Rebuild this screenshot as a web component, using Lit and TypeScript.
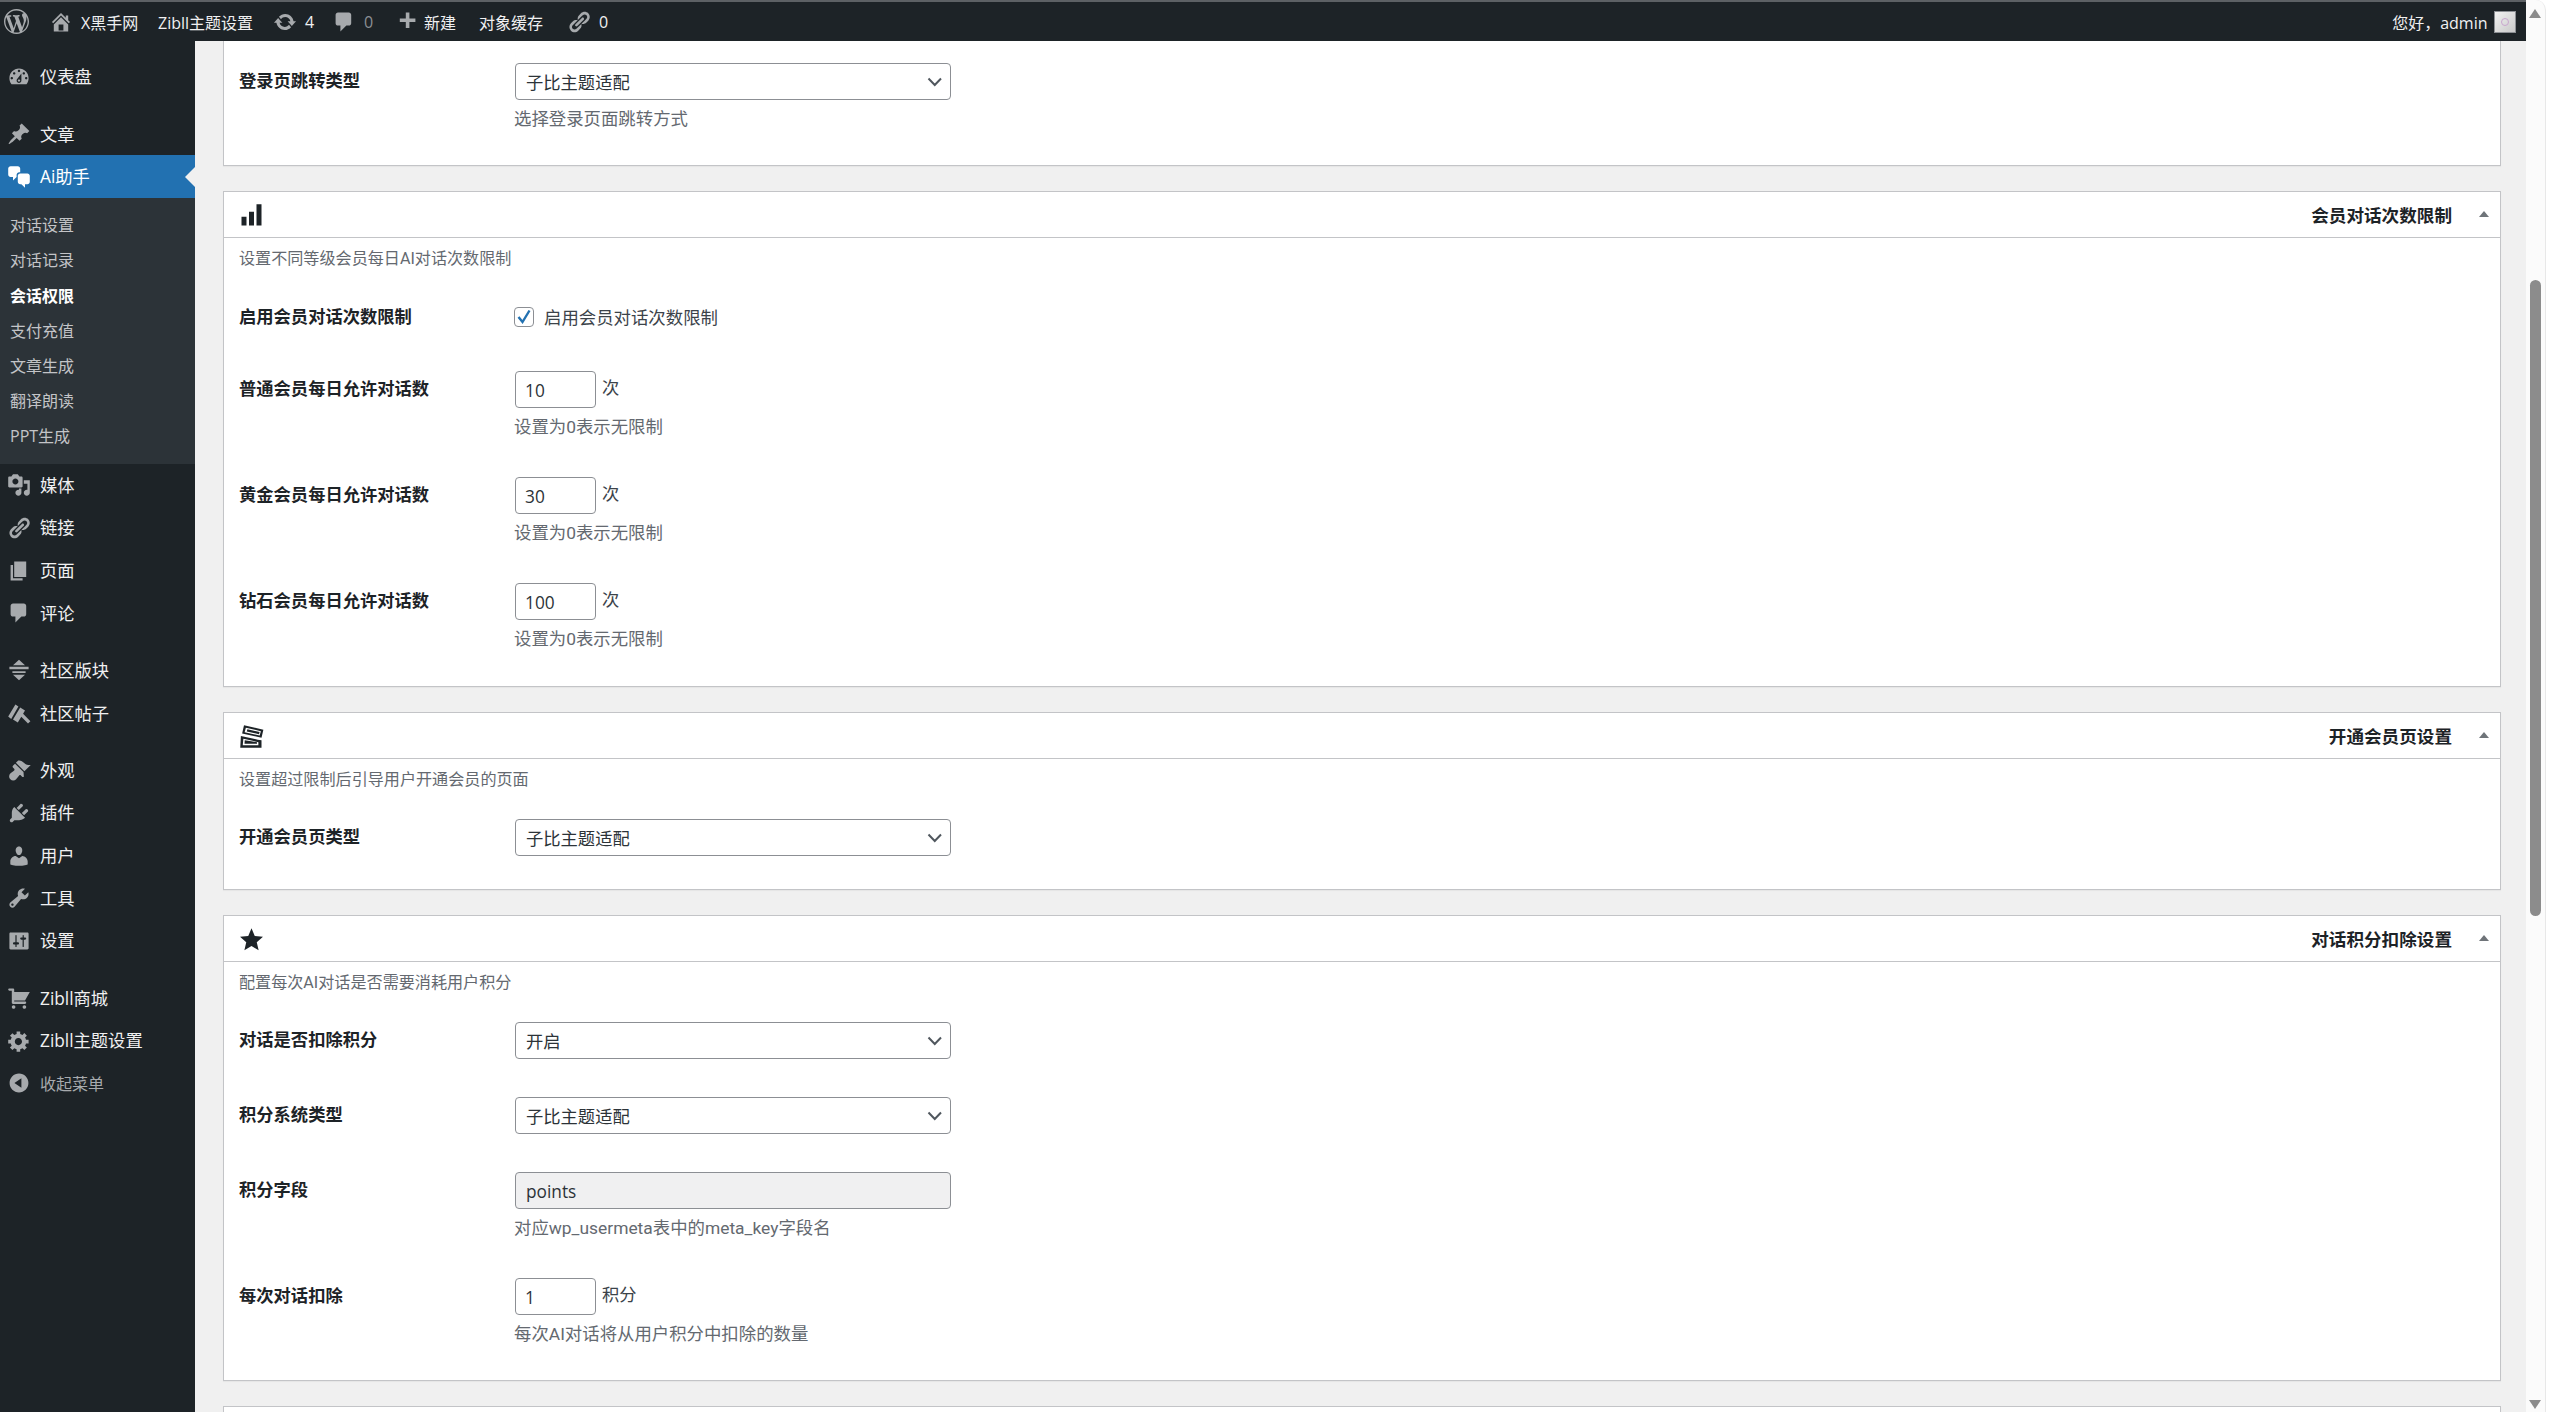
import { LitElement, html, css, svg } from "lit";
import { customElement } from "lit/decorators.js";

const P: Record<string, string> = {
  wp: "M20 10c0-5.51-4.49-10-10-10C4.48 0 0 4.49 0 10c0 5.52 4.48 10 10 10 5.51 0 10-4.48 10-10zM7.78 15.37L4.37 6.22c.55-.02 1.17-.08 1.17-.08.5-.06.44-1.13-.06-1.11 0 0-1.45.11-2.37.11-.18 0-.37 0-.58-.01C4.12 2.69 6.87 1.11 10 1.11c2.33 0 4.45.87 6.05 2.34-.68-.11-1.65.39-1.65 1.58 0 .74.45 1.36.9 2.1.35.61.55 1.36.55 2.46 0 1.49-1.4 5-1.4 5l-3.03-8.37c.54-.02.82-.17.82-.17.5-.05.44-1.25-.06-1.22 0 0-1.44.12-2.38.12-.87 0-2.33-.12-2.33-.12-.5-.03-.56 1.2-.06 1.22l.92.08 1.26 3.41zM17.41 10c.24-.64.74-1.87.43-4.25.7 1.29 1.05 2.71 1.05 4.25 0 3.29-1.73 6.24-4.4 7.78.97-2.59 1.94-5.2 2.92-7.78zM6.1 18.09C3.12 16.65 1.11 13.53 1.11 10c0-1.3.23-2.48.72-3.59C3.25 10.3 4.67 14.2 6.1 18.09zm4.03-6.63l2.58 6.98c-.86.29-1.76.45-2.71.45-.79 0-1.57-.11-2.29-.33.81-2.38 1.62-4.74 2.42-7.1z",
  home: "M16 8.5l1.53 1.53-1.06 1.06L10 4.62l-6.47 6.47-1.06-1.06L10 2.5l4 4v-2h2v4zm-6-2.46l6 5.99V18H4v-5.97zM12 17v-5H8v5h4z",
  update: "M10.2 3.28c3.53 0 6.43 2.61 6.92 6h2.08l-3.5 4-3.5-4h2.32c-.45-1.97-2.21-3.45-4.32-3.45-1.45 0-2.73.71-3.54 1.78L4.95 5.66C6.23 4.2 8.11 3.28 10.2 3.28zm-.4 13.44c-3.52 0-6.43-2.61-6.92-6H.8l3.5-4c1.17 1.33 2.33 2.67 3.5 4H5.48c.45 1.97 2.21 3.45 4.32 3.45 1.45 0 2.73-.71 3.54-1.78l1.71 1.95c-1.28 1.46-3.15 2.38-5.25 2.38z",
  comment: "M5 2h9c1.1 0 2 .9 2 2v7c0 1.1-.9 2-2 2h-2l-5 5v-5H5c-1.1 0-2-.9-2-2V4c0-1.1.9-2 2-2z",
  plus: "M17 7v3h-5v5H9v-5H4V7h5V2h3v5h5z",
  dashboard: "M3.76 16h12.48c1.1-1.37 1.76-3.11 1.76-5 0-4.42-3.58-8-8-8s-8 3.58-8 8c0 1.89.66 3.63 1.76 5zM10 4c.55 0 1 .45 1 1s-.45 1-1 1-1-.45-1-1 .45-1 1-1zM6 6c.55 0 1 .45 1 1s-.45 1-1 1-1-.45-1-1 .45-1 1-1zm8 0c.55 0 1 .45 1 1s-.45 1-1 1-1-.45-1-1 .45-1 1-1zm-5.37 5.55L12 7v6c0 1.1-.9 2-2 2s-2-.9-2-2c0-.57.24-1.08.63-1.45zM4 10c.55 0 1 .45 1 1s-.45 1-1 1-1-.45-1-1 .45-1 1-1zm12 0c.55 0 1 .45 1 1s-.45 1-1 1-1-.45-1-1 .45-1 1-1zm-5 3c0-.55-.45-1-1-1s-1 .45-1 1 .45 1 1 1 1-.45 1-1z",
  post: "M10.44 3.02l1.82-1.82 6.36 6.35-1.83 1.82c-1.05-.68-2.48-.57-3.41.36l-.75.75c-.92.93-1.04 2.35-.35 3.41l-1.83 1.82-2.41-2.41-2.8 2.79c-.42.42-3.38 2.71-3.8 2.29s1.86-3.39 2.28-3.81l2.79-2.79L4.1 9.36l1.83-1.82c1.05.69 2.48.57 3.4-.36l.75-.75c.93-.92 1.05-2.35.36-3.41z",
  chat: "M11 6h-.82C9.07 6 8 7.2 8 8.16V10l-3 3v-3H3c-1.1 0-2-.9-2-2V3c0-1.1.9-2 2-2h6c1.1 0 2 .9 2 2v3zm0 1h6c1.1 0 2 .9 2 2v5c0 1.1-.9 2-2 2h-2v3l-3-3h-1c-1.1 0-2-.9-2-2V9c0-1.1.9-2 2-2z",
  media: "M13 11V4c0-.55-.45-1-1-1h-1.67L9 1H5L3.67 3H2c-.55 0-1 .45-1 1v7c0 .55.45 1 1 1h10c.55 0 1-.45 1-1zM7 4.5c1.38 0 2.5 1.12 2.5 2.5S8.38 9.5 7 9.5 4.5 8.38 4.5 7 5.62 4.5 7 4.5zM14 6h5v10.5c0 1.38-1.12 2.5-2.5 2.5S14 17.88 14 16.5s1.12-2.5 2.5-2.5c.17 0 .34.02.5.05V9h-3V6zm-4 8.05V13h2v3.5c0 1.38-1.12 2.5-2.5 2.5S7 17.88 7 16.5 8.12 14 9.5 14c.17 0 .34.02.5.05z",
  links: "M17.74 2.76c1.68 1.69 1.68 4.41 0 6.1l-1.53 1.52c-1.12 1.12-2.7 1.47-4.14 1.09l2.62-2.61.76-.77.76-.76c.84-.84.84-2.2 0-3.04-.84-.85-2.2-.85-3.04 0l-.77.76-3.38 3.38c-.37-1.44-.02-3.02 1.1-4.14l1.52-1.53c1.69-1.68 4.42-1.68 6.1 0zM8.59 13.43l5.34-5.34c.42-.42.42-1.1 0-1.52-.44-.43-1.13-.39-1.53 0l-5.33 5.34c-.42.42-.42 1.1 0 1.52.44.43 1.13.39 1.52 0zm-.76 2.29l4.14-4.15c.38 1.44.03 3.02-1.09 4.14l-1.52 1.53c-1.69 1.68-4.41 1.68-6.1 0-1.68-1.68-1.68-4.42 0-6.1l1.53-1.52c1.12-1.12 2.7-1.47 4.14-1.1l-4.14 4.15c-.85.84-.85 2.2 0 3.05.84.84 2.2.84 3.04 0z",
  page: "M6 15V2h10v13H6zm-1 1h8v2H3V5h2v11z",
  forum: "M10 1.5L15 6H5zM2 7.2h16v2.2H2zM4.5 11h11v1.6h-11zM5 14h10l-5 4.5z",
  brush: "M1 13L7 3l2.5 1.5L3.5 15zM5 15.5l6-10 4 2.5-1.6 2.7 6.1 6.1-2 2-5.6-5.6L9 18z",
  appearance: "M14.48 11.06L7.41 3.99l1.5-1.5c.5-.56 2.3-.47 3.51.32 1.21.8 1.43 1.28 2.91 2.1 1.18.64 2.45 1.26 4.45.85zm-.71.71L6.7 4.7 4.93 6.47c-.39.39-.39 1.02 0 1.41l1.06 1.06c.39.39.39 1.03 0 1.42-.6.6-1.43 1.11-2.21 1.69-.35.26-.7.53-1.01.84-1.34 1.34-1.34 3.51 0 4.85s3.51 1.34 4.85 0c.31-.31.58-.66.84-1.01.58-.78 1.09-1.61 1.69-2.21.39-.39 1.03-.39 1.42 0l1.06 1.06c.39.39 1.02.39 1.41 0z",
  plugins: "M13.11 4.36L9.87 7.6 8 5.73l3.24-3.24c.35-.34 1.05-.2 1.56.32.52.51.66 1.21.31 1.55zm-8 1.77l.91-1.12 9.01 9.01-1.19.84c-.71.71-2.63 1.16-3.82 1.16H6.14L4.9 17.26c-.59.59-1.54.59-2.12 0-.59-.58-.59-1.53 0-2.12l1.24-1.24v-3.88c0-1.13.4-3.19 1.09-3.89zm7.26 3.97l3.24-3.24c.34-.35 1.04-.21 1.55.31.52.51.66 1.21.31 1.55l-3.24 3.25z",
  users: "M10 9.25c-2.27 0-2.73-3.44-2.73-3.44C7 4.02 7.82 2 9.97 2c2.16 0 2.98 2.02 2.71 3.81 0 0-.41 3.44-2.68 3.44zm0 2.57L12.72 10c2.39 0 4.52 2.33 4.52 4.53v2.49s-3.65 1.13-7.24 1.13c-3.65 0-7.24-1.13-7.24-1.13v-2.49c0-2.25 1.94-4.48 4.47-4.48z",
  tools: "M16.68 9.77c-1.34 1.34-3.3 1.67-4.95.99l-5.41 6.52c-.99.99-2.59.99-3.58 0s-.99-2.59 0-3.57l6.52-5.42c-.68-1.65-.35-3.61.99-4.95 1.28-1.28 3.12-1.62 4.72-1.06l-2.89 2.89 2.82 2.82 2.86-2.87c.53 1.58.18 3.39-1.08 4.65zM3.81 16.21c.4.39 1.04.39 1.43 0 .4-.4.4-1.04 0-1.43-.39-.4-1.03-.4-1.43 0-.39.39-.39 1.03 0 1.43z",
  settings: "M18 16V4c0-.55-.45-1-1-1H3c-.55 0-1 .45-1 1v12c0 .55.45 1 1 1h14c.55 0 1-.45 1-1zM8 11h1c.55 0 1 .45 1 1s-.45 1-1 1H8v1.5c0 .28-.22.5-.5.5s-.5-.22-.5-.5V13H6c-.55 0-1-.45-1-1s.45-1 1-1h1V5.5c0-.28.22-.5.5-.5s.5.22.5.5V11zm5-2h-1c-.55 0-1-.45-1-1s.45-1 1-1h1V5.5c0-.28.22-.5.5-.5s.5.22.5.5V7h1c.55 0 1 .45 1 1s-.45 1-1 1h-1v5.5c0 .28-.22.5-.5.5s-.5-.22-.5-.5V9z",
  cart: "M6 13h9c.55 0 1 .45 1 1s-.45 1-1 1H5c-.55 0-1-.45-1-1V4H2c-.55 0-1-.45-1-1s.45-1 1-1h3c.55 0 1 .45 1 1v2h13l-4 7H6v1zm-.5 3c.83 0 1.5.67 1.5 1.5S6.33 19 5.5 19 4 18.33 4 17.5 4.67 16 5.5 16zm9 0c.83 0 1.5.67 1.5 1.5s-.67 1.5-1.5 1.5-1.5-.67-1.5-1.5.67-1.5 1.5-1.5z",
  gear: "M18 12h-2.18c-.17.7-.44 1.35-.81 1.93l1.54 1.54-2.1 2.1-1.54-1.54c-.58.36-1.23.63-1.91.79V19H8v-2.18c-.68-.16-1.33-.43-1.91-.79l-1.54 1.54-2.12-2.12 1.54-1.54c-.36-.58-.63-1.23-.79-1.91H1V9.03h2.17c.16-.7.44-1.35.8-1.94L2.43 5.55l2.1-2.1 1.54 1.54c.58-.37 1.24-.64 1.93-.81V2h3v2.18c.68.16 1.33.43 1.91.79l1.54-1.54 2.12 2.12-1.54 1.54c.36.59.64 1.24.8 1.94H18V12zm-8.5 1.5c1.66 0 3-1.34 3-3s-1.34-3-3-3-3 1.34-3 3 1.34 3 3 3z",
  collapse: "M10 2.16c4.33 0 7.84 3.51 7.84 7.84s-3.51 7.84-7.84 7.84S2.16 14.33 2.16 10 5.71 2.16 10 2.16zm2 11.72V6.12L6.18 9.97z",
  bars: "M2 11h4v7H2zM8 7h4v11H8zM14 1h4v17h-4z",
  tickets: "M4 1l15.5 3.5L18 11 2.5 7.5zM5.5 3l-1 3.5 12 2.7 1-3.5zM6.7 4.2l-.5 1.7 9.8 2.2.5-1.7zM1.5 9.5L15 12.5l3 .5v6H1zM3.5 11.8L3 17h12.5v-2.5zM4.6 13l-.2 2.8h10v-1.2z",
  star: "M10 1l2.6 6.1 6.6.6-5 4.4 1.5 6.5L10 15.1l-5.7 3.5 1.5-6.5-5-4.4 6.6-.6z",
};

const icon = (name: string, size: number) =>
  html`<svg class="ic" width=${size} height=${size} viewBox="0 0 20 20" aria-hidden="true">${svg`<path d=${P[name]} fill="currentColor" fill-rule="evenodd"></path>`}</svg>`;

type MenuItem = { t: string; i: string; sep?: boolean };
const menuTop: MenuItem[] = [
  { t: "仪表盘", i: "dashboard" },
  { t: "文章", i: "post", sep: true },
];
const subMenu = ["对话设置", "对话记录", "会话权限", "支付充值", "文章生成", "翻译朗读", "PPT生成"];
const menuBottom: MenuItem[] = [
  { t: "媒体", i: "media" },
  { t: "链接", i: "links" },
  { t: "页面", i: "page" },
  { t: "评论", i: "comment" },
  { t: "社区版块", i: "forum", sep: true },
  { t: "社区帖子", i: "brush" },
  { t: "外观", i: "appearance", sep: true },
  { t: "插件", i: "plugins" },
  { t: "用户", i: "users" },
  { t: "工具", i: "tools" },
  { t: "设置", i: "settings" },
  { t: "Zibll商城", i: "cart", sep: true },
  { t: "Zibll主题设置", i: "gear" },
];

@customElement("app-root")
export class AppRoot extends LitElement {
  static styles = css`
    :host {
      display: block;
      width: 2549px;
      height: 1412px;
      overflow: hidden;
      position: relative;
      background: #f0f0f0;
      font-family: "Open Sans", "Noto Sans CJK SC", sans-serif;
      color: #1d2327;
    }
    .ic { display: block; flex: none; }
    .frame { display: flex; flex-direction: column; width: 2526px; height: 1412px; }

    .bar {
      flex: none;
      height: 39px;
      margin-top: 2px;
      background: #1d2327;
      color: #f0f0f1;
      display: flex;
      align-items: center;
      font-size: 16px;
    }
    .bar .edge { position: absolute; left: 0; top: 0; width: 2526px; height: 2px; background: #5d6165; }
    .bar .ab { display: flex; align-items: center; color: #a7aaad; }
    .bar .ab span { color: #f0f0f1; }
    .bar .ab span.dim { color: #8c8f94; }
    .bar .logo { margin-left: 4px; width: 43px; }
    .bar .home { width: 111px; gap: 8px; padding-left: 2px; box-sizing: border-box; }
    .bar .zib { width: 115px; }
    .bar .upd { width: 59px; gap: 8px; }
    .bar .com { width: 63px; gap: 8px; }
    .bar .new { width: 84px; gap: 5px; }
    .bar .cache { width: 88px; }
    .bar .lnk { gap: 8px; }
    .bar .right { margin-left: auto; display: flex; align-items: center; gap: 6.5px; padding-right: 10px; }
    .bar .avatar {
      width: 20px; height: 20px;
      border: 1px solid #8c8f94;
      background: linear-gradient(135deg, #f2f2f2, #c8c8c8);
      display: flex; align-items: center; justify-content: center;
    }
    .bar .avatar i { width: 6px; height: 6px; border-radius: 50%; border: 1px solid #c9a6cf; display: block; }

    .main { flex: 1; display: flex; min-height: 0; }
    .side {
      width: 195px;
      flex: none;
      background: #1d2327;
      padding-top: 14.6px;
      box-sizing: border-box;
    }
    .mi {
      height: 42.7px;
      display: flex;
      align-items: center;
      color: #f0f0f1;
      font-size: 17.3px;
      box-sizing: border-box;
      padding-left: 7px;
      gap: 9px;
    }
    .mi span { position: relative; top: -1px; }
    .mi .ic { color: #a7aaad; }
    .mi.sep { margin-top: 14.4px; }
    .mi.active { background: #2271b1; color: #fff; position: relative; }
    .mi.active .ic { color: #fff; }
    .mi.active::after {
      content: "";
      position: absolute;
      right: 0; top: 50%;
      margin-top: -10px;
      border: 10px solid transparent;
      border-left: 0;
      border-right-color: #f0f0f0;
    }
    .mi.collapse { color: #a7aaad; font-size: 16px; }
    .mi.collapse span { top: 0; }
    .sub {
      background: #2c3338;
      padding: 10.2px 0 9.4px;
    }
    .sub div {
      height: 35.2px;
      line-height: 35.2px;
      padding-left: 10px;
      font-size: 16px;
      color: #c3c4c7;
    }
    .sub div.cur { color: #fff; font-weight: 700; }

    .content {
      flex: 1;
      min-width: 0;
      padding: 0 25px 0 28px;
      display: flex;
      flex-direction: column;
      gap: 25px;
    }
    .card {
      flex: none;
      background: #fff;
      border: 1px solid #c3c4c7;
      box-shadow: 0 1px 1px rgba(0,0,0,.04);
      box-sizing: border-box;
    }
    .first { border-top: 0; height: 125px; padding-top: 22px; }
    .card2 { height: 496px; }
    .card3 { height: 178px; }
    .card4 { height: 466px; }
    .card5 { height: 60px; }
    .head {
      height: 45px;
      border-bottom: 1px solid #c3c4c7;
      display: flex;
      align-items: center;
      padding: 0 11px 0 15px;
      box-sizing: content-box;
    }
    .head .ic { margin-top: 1px; }
    .head .title { margin-left: auto; font-size: 17.6px; font-weight: 700; }
    .head .tri {
      margin-left: 27px;
      width: 0; height: 0;
      border: 5px solid transparent;
      border-top: 0;
      border-bottom: 6px solid #6f7479;
      margin-bottom: 2px;
    }
    .intro {
      font-family: Roboto, "Noto Sans CJK SC", sans-serif;
      font-size: 16.1px; color: #646970; line-height: 22px; padding: 10px 15px 0;
    }
    .row { display: flex; padding-left: 15px; }
    .cbrow { margin-top: 35px; }
    .mt28 { margin-top: 28px; }
    .mt38 { margin-top: 38px; }
    .mt39 { margin-top: 39px; }
    .mt42 { margin-top: 42px; }
    .lab { width: 276px; flex: none; font-size: 17.3px; font-weight: 700; line-height: 24px; padding-top: 5.5px; }
    .cbrow .lab { padding-top: 0; }
    .ctl { flex: 1; min-width: 0; }
    .line { display: flex; align-items: flex-start; }
    .sel, .inp {
      height: 37px;
      box-sizing: border-box;
      border: 1px solid #8c8f94;
      border-radius: 4px;
      background: #fff;
      font-size: 17.3px;
      line-height: 37px;
      color: #2c3338;
      padding-left: 10px;
    }
    .sel, .wide { width: 436px; position: relative; display: flex; align-items: center; }
    .sel svg { position: absolute; right: 7px; top: 10px; }
    .sel span, .wide span, .inp span { display: block; line-height: 35px; margin-top: 1px; }
    .num { width: 81px; padding-left: 9px; }
    .ro { background: #f0f0f1; }
    .unit { font-size: 17.3px; line-height: 24px; margin-left: 6px; color: #3c434a; margin-top: 5px; }
    .desc {
      font-family: Roboto, "Noto Sans CJK SC", sans-serif;
      font-size: 17.4px; color: #646970; line-height: 24px; padding-top: 1px; margin: 6px 0 -1px -1px;
    }
    .cb {
      width: 20px; height: 20px; box-sizing: border-box;
      border: 1px solid #8c8f94; border-radius: 4px; background: #fff;
      flex: none; position: relative;
      display: flex; align-items: center; justify-content: center;
      color: #2271b1;
    }
    .cbline { display: flex; align-items: center; gap: 10px; margin-left: -1px; font-size: 17.4px; color: #3c434a; line-height: 24px; }

    .scroll {
      position: absolute; right: 0; top: 0; bottom: 0; width: 23px;
      background: #fff;
    }
    .track { position: absolute; left: 0; top: 0; bottom: 0; width: 19px; background: #fbfbfb; border-right: 1px solid #e8e8e8; border-top-right-radius: 10px; }
    .thumb { position: absolute; left: 4px; top: 280px; width: 11px; height: 636px; background: #8c8c8c; border-radius: 6px; }
    .up, .down { position: absolute; left: 3px; width: 0; height: 0; border: 6.5px solid transparent; }
    .up { top: 9px; border-top: 0; border-bottom: 9px solid #8c8c8c; }
    .down { bottom: 3px; border-bottom: 0; border-top: 9px solid #8c8c8c; }
  `;

  private sel(t: string) {
    return html`<div class="sel"><span>${t}</span>
      <svg width="16" height="16" viewBox="0 0 16 16" aria-hidden="true">${svg`<path d="M1.5 4.5L7.75 11 14 4.5" fill="none" stroke="#50575e" stroke-width="2"></path>`}</svg>
    </div>`;
  }
  private head(i: string, t: string, size = 25) {
    return html`<div class="head">${icon(i, size)}<div class="title">${t}</div><div class="tri"></div></div>`;
  }
  private mi(m: MenuItem) {
    return html`<div class="mi ${m.sep ? "sep" : ""}">${icon(m.i, 24)}<span>${m.t}</span></div>`;
  }
  private numRow(lab: string, val: string, unit: string, desc: string, mt: string) {
    return html`<div class="row ${mt}">
      <div class="lab">${lab}</div>
      <div class="ctl">
        <div class="line"><div class="inp num"><span>${val}</span></div><div class="unit">${unit}</div></div>
        <div class="desc">${desc}</div>
      </div>
    </div>`;
  }
  private selRow(lab: string, v: string, mt: string) {
    return html`<div class="row ${mt}"><div class="lab">${lab}</div><div class="ctl">${this.sel(v)}</div></div>`;
  }

  render() {
    return html`
      <div class="frame">
        <div class="bar">
          <div class="edge"></div>
          <div class="ab logo">${icon("wp", 25)}</div>
          <div class="ab home">${icon("home", 24)}<span>X黑手网</span></div>
          <div class="ab zib"><span>Zibll主题设置</span></div>
          <div class="ab upd">${icon("update", 24)}<span>4</span></div>
          <div class="ab com">${icon("comment", 24)}<span class="dim">0</span></div>
          <div class="ab new">${icon("plus", 24)}<span>新建</span></div>
          <div class="ab cache"><span>对象缓存</span></div>
          <div class="ab lnk">${icon("links", 24)}<span>0</span></div>
          <div class="right"><span>您好，admin</span><div class="avatar"><i></i></div></div>
        </div>
        <div class="main">
          <nav class="side">
            ${menuTop.map((m) => this.mi(m))}
            <div class="mi active">${icon("chat", 24)}<span>Ai助手</span></div>
            <div class="sub">
              ${subMenu.map((s, i) => html`<div class=${i === 2 ? "cur" : ""}>${s}</div>`)}
            </div>
            ${menuBottom.map((m) => this.mi(m))}
            <div class="mi collapse">${icon("collapse", 24)}<span>收起菜单</span></div>
          </nav>
          <div class="content">
            <section class="card first">
              <div class="row">
                <div class="lab">登录页跳转类型</div>
                <div class="ctl">${this.sel("子比主题适配")}<div class="desc">选择登录页面跳转方式</div></div>
              </div>
            </section>

            <section class="card card2">
              ${this.head("bars", "会员对话次数限制")}
              <div class="intro">设置不同等级会员每日AI对话次数限制</div>
              <div class="row cbrow">
                <div class="lab">启用会员对话次数限制</div>
                <div class="ctl"><div class="cbline">
                  <div class="cb"><svg width="18" height="18" viewBox="0 0 18 18" aria-hidden="true">${svg`<path d="M3.5 9l4 5L14.5 2.5" fill="none" stroke="currentColor" stroke-width="2.4"></path>`}</svg></div>
                  <span>启用会员对话次数限制</span>
                </div></div>
              </div>
              ${this.numRow("普通会员每日允许对话数", "10", "次", "设置为0表示无限制", "mt42")}
              ${this.numRow("黄金会员每日允许对话数", "30", "次", "设置为0表示无限制", "mt39")}
              ${this.numRow("钻石会员每日允许对话数", "100", "次", "设置为0表示无限制", "mt39")}
            </section>

            <section class="card card3">
              ${this.head("tickets", "开通会员页设置")}
              <div class="intro">设置超过限制后引导用户开通会员的页面</div>
              ${this.selRow("开通会员页类型", "子比主题适配", "mt28")}
            </section>

            <section class="card card4">
              ${this.head("star", "对话积分扣除设置")}
              <div class="intro">配置每次AI对话是否需要消耗用户积分</div>
              ${this.selRow("对话是否扣除积分", "开启", "mt28")}
              ${this.selRow("积分系统类型", "子比主题适配", "mt38")}
              <div class="row mt38">
                <div class="lab">积分字段</div>
                <div class="ctl"><div class="sel wide ro"><span>points</span></div><div class="desc">对应wp_usermeta表中的meta_key字段名</div></div>
              </div>
              ${this.numRow("每次对话扣除", "1", "积分", "每次AI对话将从用户积分中扣除的数量", "mt39")}
            </section>

            <section class="card card5"></section>
          </div>
        </div>
      </div>
      <div class="scroll"><div class="track"><div class="up"></div><div class="thumb"></div><div class="down"></div></div></div>
    `;
  }
}
